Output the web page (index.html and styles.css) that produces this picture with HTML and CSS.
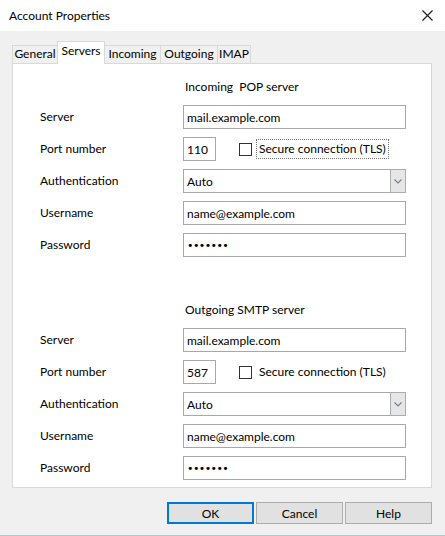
FILE: index.html
```html
<!DOCTYPE html>
<html>
<head>
<meta charset="utf-8">
<title>Account Properties</title>
<link rel="stylesheet" href="styles.css">
</head>
<body>
<div class="window">
  <div class="titlebar">
    <span class="title">Account Properties</span>
    <span class="close" aria-label="Close">
      <svg width="11" height="11" viewBox="0 0 11 11"><path d="M0.5 0.5 L10.5 10.5 M10.5 0.5 L0.5 10.5" stroke="#1a1a1a" stroke-width="1.1" fill="none"/></svg>
    </span>
  </div>
  <div class="content">
    <div class="tabs">
      <div class="tab tab-general">General</div>
      <div class="tab tab-servers active">Servers</div>
      <div class="tab tab-incoming">Incoming</div>
      <div class="tab tab-outgoing">Outgoing</div>
      <div class="tab tab-imap">IMAP</div>
    </div>
    <div class="panel">
      <section class="group">
        <div class="heading">Incoming&nbsp; POP server</div>
        <div class="form">
          <span class="label">Server</span>
          <input class="input wide" type="text" value="mail.example.com">
          <span class="label">Port number</span>
          <div class="port-row">
            <input class="input port" type="text" value="110">
            <span class="checkbox"></span>
            <span class="check-label focused">Secure connection (TLS)</span>
          </div>
          <span class="label">Authentication</span>
          <div class="select"><span class="select-value">Auto</span><span class="select-btn"><svg width="8" height="5" viewBox="0 0 8 5"><path d="M0.5 0.5 L4 4 L7.5 0.5" stroke="#6f7f95" stroke-width="1.1" fill="none"/></svg></span></div>
          <span class="label">Username</span>
          <input class="input wide" type="text" value="name@example.com">
          <span class="label">Password</span>
          <div class="input wide password">•••••••</div>
        </div>
      </section>
      <section class="group second">
        <div class="heading">Outgoing SMTP server</div>
        <div class="form">
          <span class="label">Server</span>
          <input class="input wide" type="text" value="mail.example.com">
          <span class="label">Port number</span>
          <div class="port-row">
            <input class="input port" type="text" value="587">
            <span class="checkbox"></span>
            <span class="check-label">Secure connection (TLS)</span>
          </div>
          <span class="label">Authentication</span>
          <div class="select"><span class="select-value">Auto</span><span class="select-btn"><svg width="8" height="5" viewBox="0 0 8 5"><path d="M0.5 0.5 L4 4 L7.5 0.5" stroke="#6f7f95" stroke-width="1.1" fill="none"/></svg></span></div>
          <span class="label">Username</span>
          <input class="input wide" type="text" value="name@example.com">
          <span class="label">Password</span>
          <div class="input wide password">•••••••</div>
        </div>
      </section>
    </div>
    <div class="buttons">
      <button class="btn default">OK</button>
      <button class="btn">Cancel</button>
      <button class="btn">Help</button>
    </div>
  </div>
</div>
</body>
</html>
```

FILE: styles.css
```css
* { box-sizing: border-box; }

html, body {
  margin: 0;
  padding: 0;
  width: 445px;
  height: 536px;
  overflow: hidden;
  background: #f0f0f0;
}

body {
  font-family: "Lato", "Noto Sans", "DejaVu Sans", sans-serif;
  font-size: 12px;
  color: #000;
}

.window {
  width: 445px;
  height: 536px;
  background: #f0f0f0;
  border-bottom: 1px solid #a9c6e8;
  display: flex;
  flex-direction: column;
}

.titlebar {
  height: 31px;
  background: #fff;
  display: flex;
  align-items: center;
  justify-content: space-between;
  padding: 0 12px 0 9px;
  flex: none;
}

.title {
  font-size: 12px;
  line-height: 16px;
}

.close {
  display: flex;
  align-items: center;
  justify-content: center;
  width: 12px;
  height: 12px;
}

.content {
  flex: 1;
  padding-top: 10px;
}

.tabs {
  display: flex;
  align-items: flex-end;
  height: 22px;
  padding-left: 12px;
  position: relative;
  z-index: 2;
}

.tab {
  height: 18px;
  border: 1px solid #d9d9d9;
  border-bottom: none;
  background: #f0f0f0;
  margin-left: -1px;
  display: flex;
  align-items: center;
  justify-content: center;
  line-height: 16px;
  padding-bottom: 1px;
}

.tab-general { width: 46px; margin-left: 0; }
.tab-servers { width: 48px; }
.tab-incoming { width: 57px; }
.tab-outgoing { width: 58px; }
.tab-imap { width: 34px; }

.tab.active {
  height: 23px;
  background: #fff;
  margin-bottom: -1px;
  position: relative;
  z-index: 3;
  padding-bottom: 4px;
}

.panel {
  margin: 0 13px 0 12px;
  height: 425px;
  background: #fff;
  border: 1px solid #d9d9d9;
  padding-top: 15px;
}

.heading {
  line-height: 16px;
  height: 16px;
  padding-left: 172px;
  margin-bottom: 10px;
}

.group.second {
  margin-top: 45px;
}

.form {
  display: grid;
  grid-template-columns: 143px 223px;
  grid-auto-rows: 24px;
  row-gap: 8px;
  padding-left: 27px;
  align-items: center;
}

.label {
  line-height: 16px;
}

.input {
  height: 24px;
  border: 1px solid #a8a8a8;
  background: #fff;
  font: inherit;
  color: #000;
  padding: 0 3px;
  margin: 0;
  outline: none;
  display: flex;
  align-items: center;
}

.input.wide {
  width: 223px;
}

.password {
  letter-spacing: -0.6px;
  font-size: 11px;
  font-family: "DejaVu Sans", sans-serif;
}

.port-row {
  display: flex;
  align-items: center;
  height: 24px;
}

.input.port {
  width: 33px;
}

.checkbox {
  width: 13px;
  height: 13px;
  border: 1px solid #333;
  background: #fff;
  margin-left: 23px;
  flex: none;
}

.check-label {
  margin-left: 4px;
  padding: 1px 2px;
  border: 1px dotted transparent;
  line-height: 16px;
}

.check-label.focused {
  border-color: #777;
}

.select {
  width: 223px;
  height: 24px;
  border: 1px solid #a8a8a8;
  background: #fff;
  display: flex;
  align-items: stretch;
}

.select-value {
  flex: 1;
  display: flex;
  align-items: center;
  padding-left: 3px;
}

.select-btn {
  width: 16px;
  margin: -1px -1px -1px 0;
  background: #e6e6e6;
  border: 1px solid #acacac;
  display: flex;
  align-items: center;
  justify-content: center;
}

.buttons {
  display: flex;
  justify-content: flex-end;
  gap: 2px;
  padding-right: 13px;
  margin-top: 14px;
}

.btn {
  width: 87px;
  height: 22px;
  background: #e1e1e1;
  border: 1px solid #adadad;
  font: inherit;
  color: #000;
  padding: 0;
  margin: 0;
}

.btn.default {
  border-color: #0078d7;
  box-shadow: inset 0 0 0 1px #0078d7;
}
```
